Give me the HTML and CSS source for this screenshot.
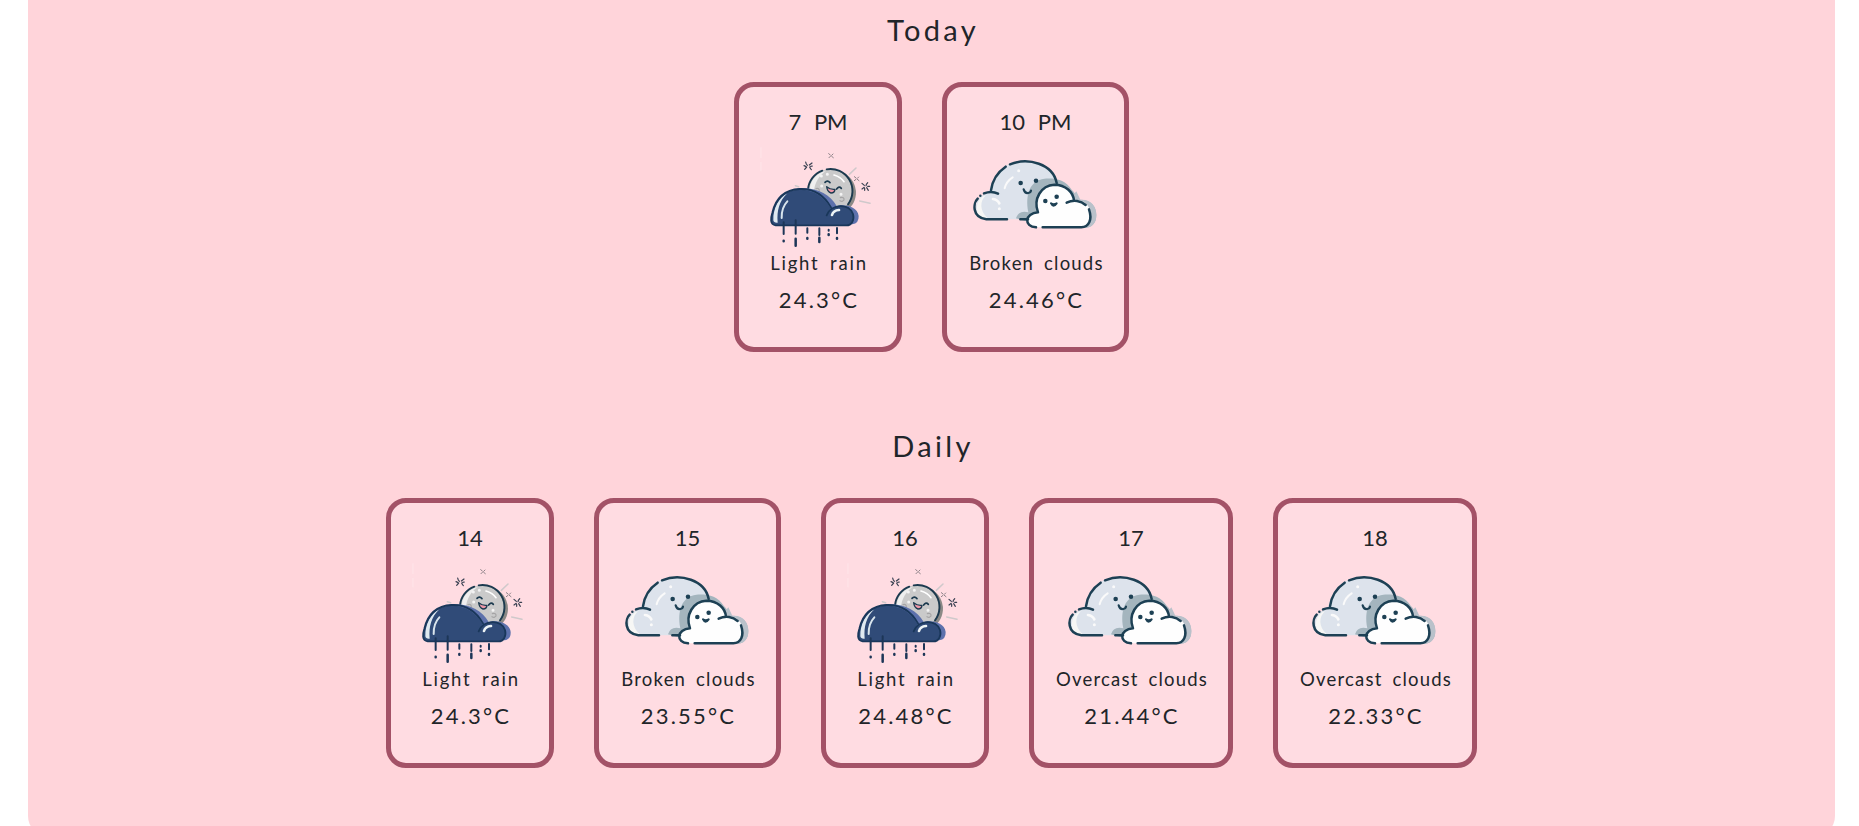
FILE: index.html
```html
<!DOCTYPE html>
<html lang="en">
<head>
<meta charset="utf-8">
<title>Forecast</title>
<link rel="stylesheet" href="styles.css">
</head>
<body>
<svg class="defs" aria-hidden="true">
  <symbol id="rain" viewBox="-6 0 360 318">
    <g fill="none" stroke-linecap="round" stroke-linejoin="round">
      <path d="M268 88 288 69M299 168 330 175M106 122 116 125" stroke="#cfc9cb" stroke-width="4.5"/>
      <path d="M3 8V38M3 52V78" stroke="#ffecee" stroke-width="2"/>
      <path d="M137 51Q138 58 142 61M156 54 148 60M134 73 140 66M149 66Q151 71 154 74M132 62 137 64M152 64 157 63" stroke="#373f50" stroke-width="3.6"/>
      <path d="M306 115 313 121M323 113Q318 117 318 122M306 132 313 127M320 128 325 136M314 130V136M323 124 329 124" stroke="#373f50" stroke-width="3.6"/>
      <path d="M206 26 211 30M219 27 215 31M207 38 211 34M215 34 220 38M283 95 288 99M296 96 292 100M283 107 288 103M292 103 297 107" stroke="#8d8288" stroke-width="3"/>
    </g>
    <path d="M225 77A66 66 0 0 1 270 188L250 195Z" fill="#8b8986"/>
    <circle cx="209" cy="139" r="66" fill="#cacaca"/>
    <path d="M149 143C147 108 169 84 197 78C178 91 164 113 162 138Z" fill="#efefef"/>
    <g fill="none" stroke-linecap="round" stroke="#1c3a4f" stroke-width="5.5">
      <path d="M144 133A66 66 0 0 1 187 77M200 73A66 66 0 0 1 264 178"/>
      <path d="M195 112Q202 104 210 113M230 132Q237 122 244 130" stroke-width="5"/>
    </g>
    <path d="M200 125Q212 135 225 133Q224 144 213 144Q202 141 200 125Z" fill="#ef98a8" stroke="#1c3a4f" stroke-width="4" stroke-linejoin="round"/>
    <g fill="none" stroke-linecap="round">
      <path d="M222 90Q242 96 252 110" stroke="#fff" stroke-width="5"/>
      <path d="M241 158Q253 155 252 165Q247 172 240 167M168 131Q178 128 178 138" stroke="#a5a4a5" stroke-width="3.5"/>
      <path d="M202 88h.1M185 123h.1M243 148h.1M184 93h.1" stroke="#f3f3f3" stroke-width="9"/>
    </g>
    <path d="M110 131C165 124 208 145 230 183C252 177 293 184 296 213Q297 235 277 238L200 220Z" fill="#5d71ac"/>
    <path d="M47 241C29 239 32 219 37 203C48 157 76 134 119 134C164 134 193 157 213 191C242 172 276 183 280 211C283 228 276 241 259 241Z" fill="#304b78"/>
    <path d="M40 226C39 190 56 159 82 145C58 168 50 196 53 233Q41 234 40 226Z" fill="#dfe9f0"/>
    <g fill="none" stroke-linecap="round" stroke-linejoin="round">
      <path d="M47 241C29 239 32 219 37 203C48 157 76 134 119 132C164 130 194 154 213 187M200 211C214 175 270 175 279 207C284 225 275 241 259 241H47" stroke="#19375a" stroke-width="5.5"/>
      <path d="M82 169Q64 188 65 219" stroke="#d9e5ed" stroke-width="6"/>
      <path d="M216 210Q220 196 237 195" stroke="#edf4f6" stroke-width="8"/>
      <path d="M71 232V267M107 226V266M142 250V263M178 250V270M206 254V257M231 249V265" stroke="#1d3657" stroke-width="6"/>
      <path d="M71 287V289M107 281V302M142 279V281M178 278V291M206 268V270M231 279V281" stroke="#1d3657" stroke-width="7.5"/>
    </g>
  </symbol>
  <symbol id="clouds" viewBox="1 -15 420 318">
    <path d="M60 208C15 203 23 133 70 129C80 69 120 35 169 33C223 31 264 59 273 104L290 208Z" fill="#dde3ec"/>
    <path d="M42 200C27 180 32 145 61 135C42 153 41 181 66 205Q51 208 42 200Z" fill="#f7f7f5"/>
    <path d="M188 187C178 133 193 91 236 86C270 84 299 89 318 119C331 131 332 143 343 149C376 149 392 170 392 195C392 221 377 233 359 233L210 222L151 205Q158 180 188 187Z" fill="#a4b5be"/>
    <path d="M332 124 344 149C378 147 392 170 392 195C392 221 377 233 359 233L340 170L304 158Z" fill="#b9c1ca"/>
    <path d="M213 232C173 232 175 187 218 188C203 146 224 105 266 104C303 104 321 126 325 151C363 146 378 177 376 204C374 221 364 232 347 232Z" fill="#fefefe"/>
    <g fill="none" stroke="#1d4054" stroke-width="7.5" stroke-linecap="round" stroke-linejoin="round">
      <path d="M124 208H62C17 202 23 158 36 146M44 137h.1M55 130Q78 121 97 131M76 121C80 91 98 65 120 50M133 43C188 21 262 42 273 99M164 208H187"/>
      <path d="M211 232C174 230 176 190 217 187C202 147 226 106 266 104C301 104 322 127 325 151M303 158C324 148 346 152 360 165M370 178C381 210 369 232 347 232H231"/>
      <path d="M174 118Q178 131 188 129Q195 128 196 122" stroke-width="6.5"/>
      <path d="M256 160Q263 174 273 160Q264 165 256 160" stroke-width="6"/>
    </g>
    <g fill="#1d4054"><circle cx="165" cy="99" r="6.8"/><circle cx="211" cy="92" r="6.8"/><circle cx="239" cy="153" r="6.8"/><circle cx="273" cy="140" r="6.8"/></g>
    <g fill="none" stroke="#fafafa" stroke-linecap="round">
      <path d="M117 115Q122 94 141 82" stroke-width="6"/>
      <path d="M159 62h.1M101 176h.1" stroke-width="9"/>
      <path d="M82 147Q96 149 101 160" stroke-width="8"/>
    </g>
  </symbol>
</svg>
<main class="panel">
  <section class="section">
    <h2 class="title today">Today</h2>
    <div class="cards">
      <article class="card rain"><p class="time hour">7 PM</p><svg class="icon"><use href="#rain"/></svg><p class="desc">Light rain</p><p class="temp">24.3°C</p></article>
      <article class="card broken"><p class="time hour">10 PM</p><svg class="icon"><use href="#clouds"/></svg><p class="desc">Broken clouds</p><p class="temp">24.46°C</p></article>
    </div>
  </section>
  <section class="section">
    <h2 class="title daily">Daily</h2>
    <div class="cards">
      <article class="card rain"><p class="time">14</p><svg class="icon"><use href="#rain"/></svg><p class="desc">Light rain</p><p class="temp">24.3°C</p></article>
      <article class="card broken"><p class="time">15</p><svg class="icon"><use href="#clouds"/></svg><p class="desc">Broken clouds</p><p class="temp">23.55°C</p></article>
      <article class="card rain"><p class="time">16</p><svg class="icon"><use href="#rain"/></svg><p class="desc">Light rain</p><p class="temp">24.48°C</p></article>
      <article class="card overcast"><p class="time">17</p><svg class="icon"><use href="#clouds"/></svg><p class="desc">Overcast clouds</p><p class="temp">21.44°C</p></article>
      <article class="card overcast"><p class="time">18</p><svg class="icon"><use href="#clouds"/></svg><p class="desc">Overcast clouds</p><p class="temp">22.33°C</p></article>
    </div>
  </section>
</main>
</body>
</html>
```
FILE: styles.css
```css
* { box-sizing: border-box; }
html { height: 100%; overflow: hidden; }
body {
  margin: 0;
  height: 100%;
  overflow: hidden;
  background: #fff;
  color: #212529;
  font-family: Lato, "Open Sans", sans-serif;
}
.defs { display: none; }
.panel {
  height: 836px;
  margin: 0 24px 0 28px;
  background: #ffd4da;
  border-radius: 0 0 20px 20px;
}
.section { height: 416px; padding-top: 10px; }
.title {
  margin: 0 0 32px;
  height: 40px;
  padding-left: 3px;
  line-height: 40px;
  font-size: 29px;
  font-weight: 400;
  text-align: center;
}
.today { letter-spacing: 3.3px; }
.daily { letter-spacing: 3.3px; }
.cards { display: flex; justify-content: center; gap: 40px; }
.card {
  display: flex;
  flex-direction: column;
  align-items: center;
  height: 270px;
  padding-top: 23px;
  background: #ffdce2;
  border: 5px solid #a35267;
  border-radius: 20px;
}
.rain { width: 168px; }
.broken { width: 187px; }
.overcast { width: 204px; }
.card p { margin: 0; white-space: nowrap; }
.card .time { font-size: 22px; line-height: 24px; }
.card .hour { word-spacing: 7px; }
.icon { width: 140px; height: 106px; margin-top: 11px; flex: none; }
.rain .icon { width: 120px; }
.card .desc { padding-left: 2px; font-size: 18.5px; line-height: 24px; letter-spacing: 1.2px; word-spacing: 4px; }
.rain .desc { letter-spacing: 1.8px; }
.card .temp { margin-top: 10px; padding-left: 2px; font-size: 22px; line-height: 30px; letter-spacing: 2.2px; }
```
